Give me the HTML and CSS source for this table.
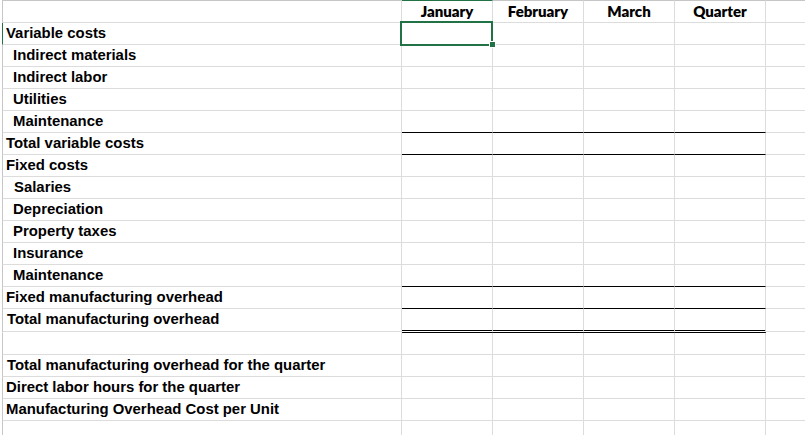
FILE: index.html
```html
<!DOCTYPE html>
<html lang="en">
<head>
<meta charset="utf-8">
<title>Overhead budget</title>
<link rel="stylesheet" href="styles.css">
</head>
<body>
<div class="sheet">
  <div class="row head">
    <div class="c a"></div>
    <div class="c n sel-col">January</div>
    <div class="c n">February</div>
    <div class="c n">March</div>
    <div class="c n">Quarter</div>
    <div class="c f"></div>
  </div>
  <div class="row sel-row">
    <div class="c a">Variable costs</div>
    <div class="c n"></div><div class="c n"></div><div class="c n"></div><div class="c n"></div><div class="c f"></div>
  </div>
  <div class="row">
    <div class="c a ind">Indirect materials</div>
    <div class="c n"></div><div class="c n"></div><div class="c n"></div><div class="c n"></div><div class="c f"></div>
  </div>
  <div class="row">
    <div class="c a ind">Indirect labor</div>
    <div class="c n"></div><div class="c n"></div><div class="c n"></div><div class="c n"></div><div class="c f"></div>
  </div>
  <div class="row">
    <div class="c a ind">Utilities</div>
    <div class="c n"></div><div class="c n"></div><div class="c n"></div><div class="c n"></div><div class="c f"></div>
  </div>
  <div class="row blk">
    <div class="c a ind">Maintenance</div>
    <div class="c n"></div><div class="c n"></div><div class="c n"></div><div class="c n"></div><div class="c f"></div>
  </div>
  <div class="row blk">
    <div class="c a">Total variable costs</div>
    <div class="c n"></div><div class="c n"></div><div class="c n"></div><div class="c n"></div><div class="c f"></div>
  </div>
  <div class="row">
    <div class="c a">Fixed costs</div>
    <div class="c n"></div><div class="c n"></div><div class="c n"></div><div class="c n"></div><div class="c f"></div>
  </div>
  <div class="row">
    <div class="c a ind2">Salaries</div>
    <div class="c n"></div><div class="c n"></div><div class="c n"></div><div class="c n"></div><div class="c f"></div>
  </div>
  <div class="row">
    <div class="c a ind">Depreciation</div>
    <div class="c n"></div><div class="c n"></div><div class="c n"></div><div class="c n"></div><div class="c f"></div>
  </div>
  <div class="row">
    <div class="c a ind">Property taxes</div>
    <div class="c n"></div><div class="c n"></div><div class="c n"></div><div class="c n"></div><div class="c f"></div>
  </div>
  <div class="row">
    <div class="c a ind">Insurance</div>
    <div class="c n"></div><div class="c n"></div><div class="c n"></div><div class="c n"></div><div class="c f"></div>
  </div>
  <div class="row blk">
    <div class="c a ind">Maintenance</div>
    <div class="c n"></div><div class="c n"></div><div class="c n"></div><div class="c n"></div><div class="c f"></div>
  </div>
  <div class="row blk">
    <div class="c a">Fixed manufacturing overhead</div>
    <div class="c n"></div><div class="c n"></div><div class="c n"></div><div class="c n"></div><div class="c f"></div>
  </div>
  <div class="row dbl">
    <div class="c a t">Total manufacturing overhead</div>
    <div class="c n"></div><div class="c n"></div><div class="c n"></div><div class="c n"></div><div class="c f"></div>
  </div>
  <div class="row">
    <div class="c a"></div>
    <div class="c n"></div><div class="c n"></div><div class="c n"></div><div class="c n"></div><div class="c f"></div>
  </div>
  <div class="row">
    <div class="c a t">Total manufacturing overhead for the quarter</div>
    <div class="c n"></div><div class="c n"></div><div class="c n"></div><div class="c n"></div><div class="c f"></div>
  </div>
  <div class="row">
    <div class="c a">Direct labor hours for the quarter</div>
    <div class="c n"></div><div class="c n"></div><div class="c n"></div><div class="c n"></div><div class="c f"></div>
  </div>
  <div class="row">
    <div class="c a">Manufacturing Overhead Cost per Unit</div>
    <div class="c n"></div><div class="c n"></div><div class="c n"></div><div class="c n"></div><div class="c f"></div>
  </div>
  <div class="row">
    <div class="c a"></div>
    <div class="c n"></div><div class="c n"></div><div class="c n"></div><div class="c n"></div><div class="c f"></div>
  </div>
  <div class="selection"></div>
  <div class="handle"></div>
</div>
</body>
</html>
```
FILE: styles.css
```css
html, body {
  margin: 0;
  padding: 0;
  overflow: hidden;
  background: #fff;
}

body {
  font-family: "Liberation Sans", Arial, sans-serif;
  font-weight: bold;
  font-size: 14.9px;
  color: #000;
}

.sheet {
  position: relative;
  box-sizing: border-box;
  width: 805px;
  height: 435px;
  padding-left: 2px;
  overflow: hidden;
}

.row {
  display: flex;
  height: 22px;
}

.row.head {
  height: 23px;
}

.c {
  box-sizing: border-box;
  border-right: 1px solid #dcdcdc;
  border-bottom: 1px solid #dcdcdc;
  line-height: 17px;
  padding-top: 2px;
  white-space: nowrap;
  overflow: visible;
}

.a {
  width: 400px;
  flex: none;
  border-left: 1px solid #c6c6c6;
  padding-left: 3px;
}

.a.t {
  padding-left: 4px;
}

.a.ind {
  padding-left: 10px;
}

.a.ind2 {
  padding-left: 11px;
}

.n {
  width: 91px;
  flex: none;
  text-align: center;
}

.f {
  flex: 1;
  border-right: none;
}

.head .c {
  border-top: 1px solid #c6c6c6;
  font-family: Lato, "Liberation Sans", sans-serif;
  font-weight: 800;
  font-size: 15px;
  padding-top: 2px;
}

.head .sel-col {
  border-top-color: #217346;
}

.sel-row .a {
  border-left-color: #217346;
}

.blk .n {
  border-bottom-color: #000;
}

.row.dbl {
  height: 24px;
}

.dbl .n {
  border-bottom: 3px double #000;
}

.dbl .a,
.dbl .f {
  border-bottom-color: #fff;
  box-shadow: inset 0 -1px 0 #dcdcdc;
}

.selection {
  position: absolute;
  left: 400px;
  top: 21px;
  width: 93px;
  height: 25px;
  box-sizing: border-box;
  border: 2px solid #217346;
}

.handle {
  position: absolute;
  left: 489px;
  top: 41px;
  width: 7px;
  height: 7px;
  box-sizing: border-box;
  background: #217346;
  border: 1px solid #fff;
}
```
